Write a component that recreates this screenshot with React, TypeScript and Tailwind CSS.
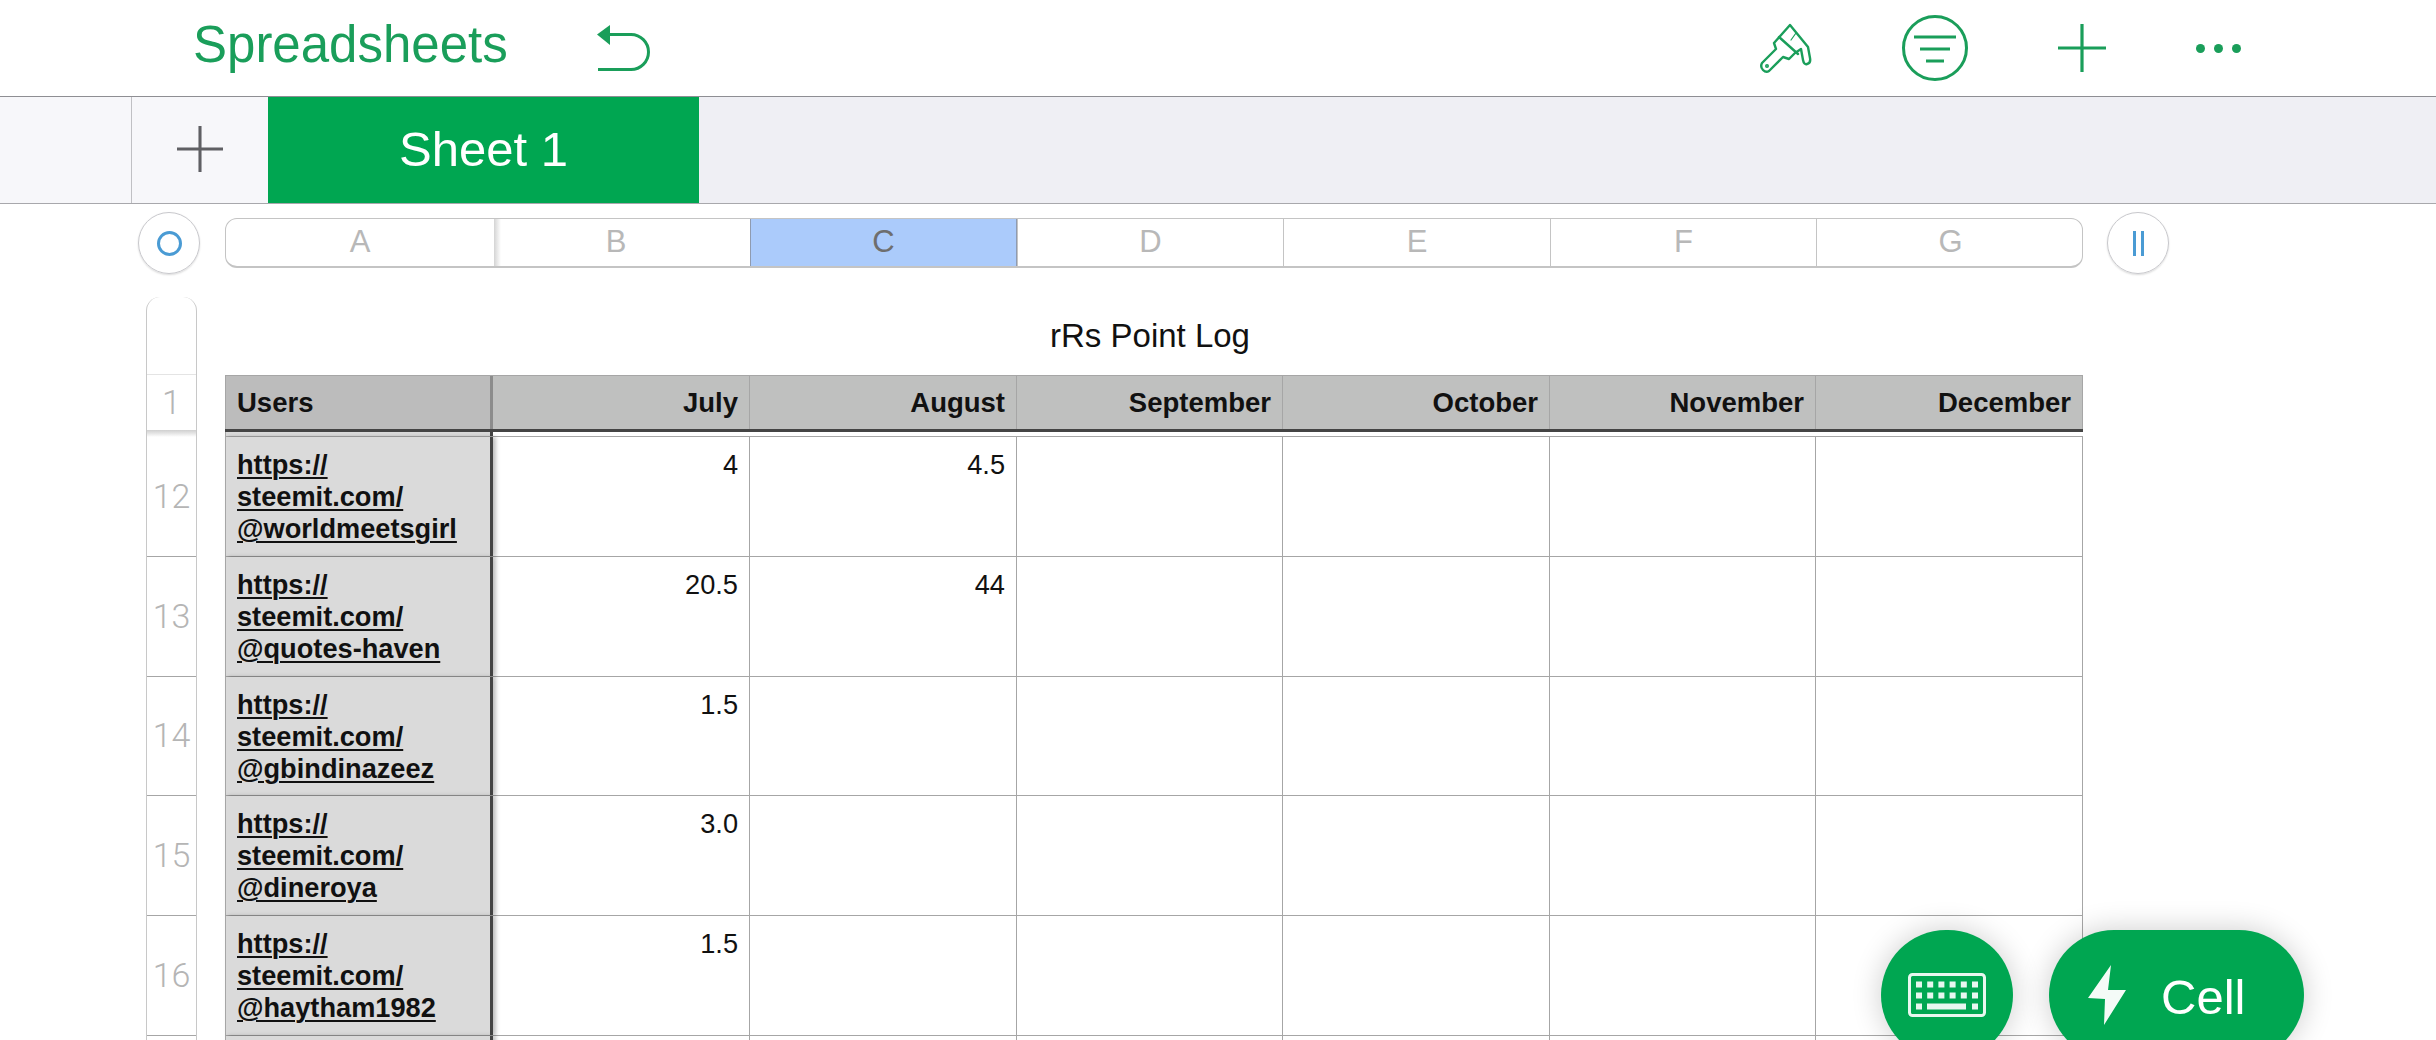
import React from 'react';

const FONT = "[font-family:'Liberation_Sans',Arial,sans-serif]";
const colWidths = 'grid grid-cols-[268px_256px_267px_266px_267px_266px_268px] w-[1858px]';

const months = ['July', 'August', 'September', 'October', 'November', 'December'];

interface RowData {
  num: number;
  handle: string;
  july?: string;
  august?: string;
}

const rows: RowData[] = [
  { num: 12, handle: '@worldmeetsgirl', july: '4', august: '4.5' },
  { num: 13, handle: '@quotes-haven', july: '20.5', august: '44' },
  { num: 14, handle: '@gbindinazeez', july: '1.5' },
  { num: 15, handle: '@dineroya', july: '3.0' },
  { num: 16, handle: '@haytham1982', july: '1.5' },
  { num: 17, handle: '' },
];

function UndoIcon() {
  return (
    <svg width="75" height="65" viewBox="0 0 75 65" fill="none" className="ml-[76px]">
      <path d="M13 18.5 L26 9 L26 29 Z" fill="#1a9e5a" />
      <path d="M24 18.5 H47 A17.5 17.5 0 0 1 47 53.5 H14" stroke="#1a9e5a" strokeWidth="3" />
    </svg>
  );
}

function BrushIcon() {
  return (
    <svg width="75" height="65" viewBox="0 0 75 65" fill="none" stroke="#1a9e5a" strokeWidth="2.4" strokeLinejoin="round" strokeLinecap="round">
      <path d="M39 9 L23 27 L25 33 L11 47 Q9 51 12 54 Q15 57 18 55 L32 41 L38 43 L44 37 L50 33 L52 44 Q53 49 56 48 Q60 47 59 42 L57 31 Z" />
      <path d="M28 21 L47 38" />
      <path d="M40 24 L45 17" strokeWidth="1.2" />
      <circle cx="16" cy="50" r="0.8" />
    </svg>
  );
}

function FilterIcon() {
  return (
    <svg width="68" height="68" viewBox="0 0 68 68" fill="none" stroke="#1a9e5a" strokeWidth="3">
      <circle cx="34" cy="34" r="31.5" />
      <path d="M13 23 H55 M19 35 H49 M25 47 H43" />
    </svg>
  );
}

function PlusIcon({ color, size }: { color: string; size: number }) {
  return (
    <svg width={size} height={size} viewBox="0 0 48 48" stroke={color} strokeWidth="3.2">
      <path d="M24 0 V48 M0 24 H48" />
    </svg>
  );
}

function KeyboardIcon() {
  const keys: [number, number, number][] = [];
  for (let r = 0; r < 2; r++) {
    for (let c = 0; c < 6; c++) keys.push([8 + c * 11.2, 8.5 + r * 11, 6]);
  }
  return (
    <svg width="78" height="44" viewBox="0 0 78 44" fill="#e8f7ef">
      <rect x="1.5" y="1.5" width="75" height="41" rx="3" fill="none" stroke="#e8f7ef" strokeWidth="3" />
      {keys.map(([x, y, s], i) => (
        <rect key={i} x={x} y={y} width={s} height={s} />
      ))}
      <rect x="8" y="30.5" width="6" height="6" />
      <rect x="19" y="30.5" width="39" height="6" />
      <rect x="64" y="30.5" width="6" height="6" />
    </svg>
  );
}

function BoltIcon() {
  return (
    <svg width="40" height="60" viewBox="0 0 40 60" fill="#f4fbf7">
      <path d="M23 0 L0 33 L17 34 L16 60 L38 25 L20 25 Z" />
    </svg>
  );
}

function HeaderStrip() {
  const letters = ['A', 'B', 'C', 'D', 'E', 'F', 'G'];
  return (
    <div className="flex items-center h-[78px] pl-[138px] shrink-0">
      <div className="w-[62px] h-[62px] rounded-full border border-[#c8c8cc] shadow-[0_1px_2px_rgba(0,0,0,0.15)] flex items-center justify-center mr-[25px]">
        <div className="w-[25px] h-[25px] rounded-full border-[3px] border-[#4a9bd4]" />
      </div>
      <div className={`${colWidths} h-[50px] border border-[#c4c4c4] border-b-2 rounded-[12px] overflow-hidden`}>
        {letters.map((l, i) => (
          <div
            key={l}
            className={
              'flex items-center justify-center text-[31px] ' +
              (i === 2
                ? 'bg-[#abcbfb] text-[#6e6e6e] border-x border-[#8f9bb0]'
                : i === 1
                  ? 'text-[#b8b8b8] pr-[12px] bg-[linear-gradient(90deg,#d4d4d4,#ffffff_7px)]'
                  : i === 0
                    ? 'text-[#b8b8b8] '
                    : 'text-[#b8b8b8] border-l border-[#c4c4c4]')
            }
          >
            {l}
          </div>
        ))}
      </div>
      <div className="w-[62px] h-[62px] rounded-full border border-[#c8c8cc] shadow-[0_1px_2px_rgba(0,0,0,0.15)] flex items-center justify-center gap-[5px] ml-[24px]">
        <div className="w-[3px] h-[25px] bg-[#4a9bd4]" />
        <div className="w-[3px] h-[25px] bg-[#4a9bd4]" />
      </div>
    </div>
  );
}

function RowNumbers() {
  return (
    <div className="w-[51px] shrink-0 ml-[146px] mt-[18px] border-x border-[#c8c8c8] rounded-t-[14px] text-[#b5b5b5] text-[34px] [font-family:'Roboto',sans-serif] font-light">
      <div className="h-[78px] border-b border-[#e4e4e4]" />
      <div className="h-[55px] flex items-center justify-center">1</div>
      <div className="h-[7px] bg-[linear-gradient(180deg,#cfcfcf,#e6e6e6_50%,#ffffff)]" />
      {rows.map((r) => (
        <div key={r.num} className="h-[119.75px] flex items-center justify-center border-b border-[#a6a6a6]">
          {r.handle ? r.num : ''}
        </div>
      ))}
    </div>
  );
}

function DataRow({ row }: { row: RowData }) {
  return (
    <div className={`${colWidths} h-[119.75px] border-b border-[#a6a6a6] text-[27.2px] leading-[32px] text-[#111]`}>
      <div className="bg-[#dadada] border-l border-[#a6a6a6] border-r-[3px] border-r-[#444] shadow-[3px_0_4px_rgba(0,0,0,0.25)] relative pl-[11px] pt-[12px] font-bold underline decoration-2 underline-offset-[3px]">
        {row.handle && (
          <>
            <div>https://</div>
            <div>steemit.com/</div>
            <div className="whitespace-nowrap">{row.handle}</div>
          </>
        )}
      </div>
      <div className="text-right pr-[11px] pt-[12px]">{row.july}</div>
      <div className="text-right pr-[11px] pt-[12px] border-l border-[#a6a6a6]">{row.august}</div>
      {[0, 1, 2, 3].map((i) => (
        <div key={i} className={'border-l border-[#a6a6a6] ' + (i === 3 ? 'border-r' : '')} />
      ))}
    </div>
  );
}

function SheetTable() {
  return (
    <div className="ml-[28px] mt-[18px] w-[1858px]">
      <div className="h-[78px] flex items-center justify-center text-[33px] text-[#111] pr-[8px]">rRs Point Log</div>
      <div className={`${colWidths} h-[57px] bg-[#bfc0bf] border-t border-[#a6a6a6] border-b-[3px] border-b-[#444] text-[27.5px] font-bold text-[#111]`}>
        <div className="bg-[#bcbcbc] border-l border-[#a6a6a6] border-r-[3px] border-r-[#8c8c8c] pl-[11px] flex items-center">Users</div>
        {months.map((m, i) => (
          <div key={m} className={'flex items-center justify-end pr-[11px] ' + (i > 0 ? 'border-l border-[#a6a6a6] ' : '') + (i === 5 ? 'border-r border-[#a6a6a6]' : '')}>
            {m}
          </div>
        ))}
      </div>
      <div className={`${colWidths} h-[5px] border-b border-[#a6a6a6]`}>
        <div className="bg-[#dadada] border-l border-[#a6a6a6] border-r-[3px] border-r-[#444]" />
      </div>
      {rows.map((r) => (
        <DataRow key={r.num} row={r} />
      ))}
    </div>
  );
}

export default function App() {
  return (
    <div className={`${FONT} relative h-screen w-full overflow-hidden bg-white`}>
      {/* top toolbar */}
      <div className="h-[96px] flex items-center pl-[193px] pr-[195px]">
        <span className="text-[51px] text-[#1a9e5a] pb-[6px]">Spreadsheets</span>
        <UndoIcon />
        <div className="ml-auto flex items-center">
          <div className="mr-[-1px]"><BrushIcon /></div>
          <div className="ml-[76px]"><FilterIcon /></div>
          <div className="ml-[89px]"><PlusIcon color="#1a9e5a" size={48} /></div>
          <div className="ml-[90px] flex gap-[9px]">
            <div className="w-[9px] h-[9px] rounded-full bg-[#1a9e5a]" />
            <div className="w-[9px] h-[9px] rounded-full bg-[#1a9e5a]" />
            <div className="w-[9px] h-[9px] rounded-full bg-[#1a9e5a]" />
          </div>
        </div>
      </div>
      {/* sheet tabs */}
      <div className="h-[108px] flex bg-[#efeff4] border-y border-[#a8a8ac] border-t-[#8e8e93]">
        <div className="w-[132px] bg-[#f7f7fa] border-r border-[#c0c0c4]" />
        <div className="w-[136px] bg-[#f7f7fa] flex items-center justify-center pb-[2px]">
          <PlusIcon color="#5f5f63" size={46} />
        </div>
        <div className="w-[431px] bg-[#00a651] text-white text-[49px] flex items-center justify-center">Sheet 1</div>
      </div>
      <HeaderStrip />
      <div className="flex -mt-[3px]">
        <RowNumbers />
        <SheetTable />
      </div>
      {/* floating buttons */}
      <div className="absolute left-[1881px] top-[930px] w-[132px] h-[130px] rounded-full bg-[#00a651] shadow-[0_0_30px_rgba(0,0,0,0.2)] flex items-center justify-center">
        <KeyboardIcon />
      </div>
      <div className="absolute left-[2049px] top-[930px] w-[255px] h-[130px] rounded-full bg-[#00a651] shadow-[0_0_30px_rgba(0,0,0,0.2)] flex items-center pl-[39px] text-white">
        <BoltIcon />
        <span className="ml-[33px] text-[49px] pt-[6px]">Cell</span>
      </div>
    </div>
  );
}
